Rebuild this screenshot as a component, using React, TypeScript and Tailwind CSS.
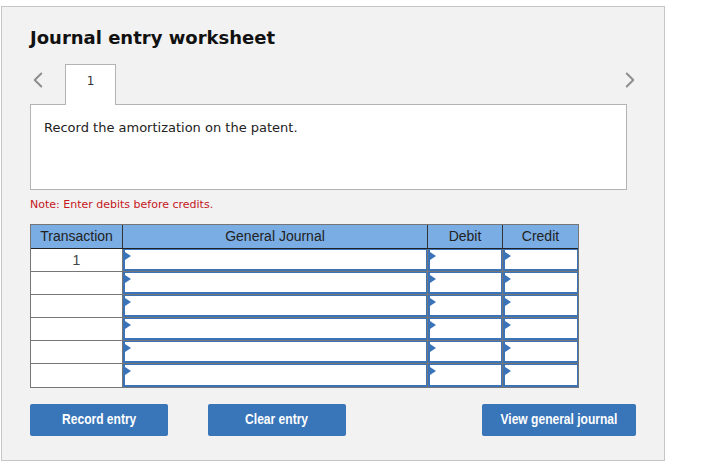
import { ChevronLeft, ChevronRight } from "lucide-react";

const ROWS = ["1", "", "", "", "", ""];

function EntryCell() {
  return (
    <div className="relative h-full border-b-2 border-l-2 border-t border-r border-[#3a73b8] bg-white">
      <span className="absolute left-0 top-[2px] h-0 w-0 border-y-[4px] border-l-[6px] border-y-transparent border-l-[#3a73b8]" />
    </div>
  );
}

function ActionButton({ label, className = "" }: { label: string; className?: string }) {
  return (
    <button className={`h-[32px] rounded-[2px] bg-[#3875b9] ${className}`}>
      <span className="inline-block scale-x-[0.86]">{label}</span>
    </button>
  );
}

export default function App() {
  return (
    <div className="min-h-[467px] bg-white pl-px pt-[6px] font-['DejaVu_Sans',Verdana,sans-serif]">
      <div className="h-[455px] w-[664px] border border-[#c6c6c6] bg-[#f2f2f2] px-[28px] pt-[18px]">
        <h1 className="text-[18px] font-bold leading-[26px] text-[#111]">
          Journal entry worksheet
        </h1>

        <div className="mt-[13px] flex items-end">
          <ChevronLeft size={26} strokeWidth={1.9} className="mb-[11px] ml-[-5px] text-[#8f8f8f]" />
          <div className="relative z-10 -mb-px ml-[14px] flex h-[41px] w-[51px] justify-center border border-b-0 border-[#b3b3b3] bg-white pt-[7px] text-[12px] text-[#333]">
            1
          </div>
          <ChevronRight size={26} strokeWidth={1.9} className="mb-[11px] ml-auto mr-[-7px] text-[#8f8f8f]" />
        </div>

        <div className="h-[86px] w-[597px] border border-[#b3b3b3] bg-white px-[13px] pt-[13px] text-[13px] text-[#222]">
          Record the amortization on the patent.
        </div>

        <p className="mt-[7px] text-[11px] text-[#c4161c]">
          Note: Enter debits before credits.
        </p>

        <div className="mt-[10px] w-[549px] border border-[#767676] bg-white font-['Liberation_Sans',Arial,sans-serif] text-[14px] text-[#222]">
          <div className="grid h-[24px] grid-cols-[92px_305px_75px_75px] border-b border-[#222] bg-[#7aade4] leading-[22px]">
            <div className="border-r border-[#333] text-center">Transaction</div>
            <div className="border-r border-[#333] text-center">General Journal</div>
            <div className="border-r border-[#333] text-center">Debit</div>
            <div className="text-center">Credit</div>
          </div>
          {ROWS.map((label, i) => (
            <div
              key={i}
              className={`grid h-[23px] grid-cols-[92px_305px_75px_75px] ${i < ROWS.length - 1 ? "border-b border-[#767676]" : ""}`}
            >
              <div className="border-r border-[#767676] text-center leading-[22px] text-[#444]">
                {label}
              </div>
              <div className="border-r border-[#767676]">
                <EntryCell />
              </div>
              <div className="border-r border-[#767676]">
                <EntryCell />
              </div>
              <div>
                <EntryCell />
              </div>
            </div>
          ))}
        </div>

        <div className="mt-[16px] flex font-['Liberation_Sans',Arial,sans-serif] text-[14px] font-bold text-white">
          <ActionButton label="Record entry" className="w-[138px]" />
          <ActionButton label="Clear entry" className="ml-[40px] w-[138px]" />
          <ActionButton label="View general journal" className="ml-auto mr-0 w-[154px]" />
        </div>
      </div>
    </div>
  );
}
